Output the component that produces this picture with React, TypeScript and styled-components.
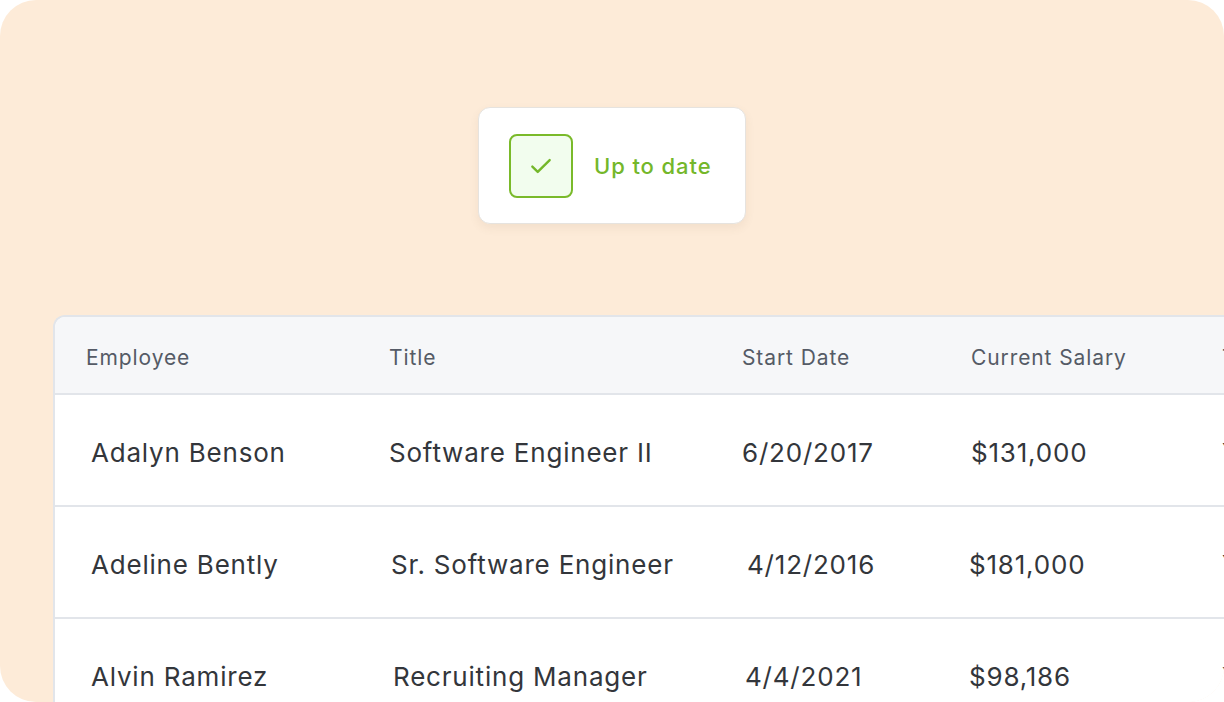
import React from "react";
import styled, { createGlobalStyle } from "styled-components";

const Global = createGlobalStyle`
  body { margin: 0; background: #fff; font-family: Inter, "Noto Sans", sans-serif; }
`;

const Panel = styled.div`
  width: 1224px;
  height: 702px;
  background: #fdebd8;
  border-radius: 36px;
  overflow: hidden;
  display: flex;
  flex-direction: column;
  align-items: center;
  padding-top: 107px;
  box-sizing: border-box;
`;

const Badge = styled.div`
  width: 268px;
  height: 117px;
  box-sizing: border-box;
  background: #fff;
  border: 1px solid #e6e3df;
  border-radius: 12px;
  box-shadow: 0 4px 10px rgba(120, 90, 60, 0.08);
  display: flex;
  align-items: center;
  padding-left: 30px;
  gap: 21px;
`;

const CheckBox = styled.div`
  width: 64px;
  height: 64px;
  box-sizing: border-box;
  border: 2px solid #7aba2a;
  border-radius: 8px;
  background: #f2fdee;
  display: flex;
  align-items: center;
  justify-content: center;
`;

const BadgeText = styled.span`
  font-size: 22px;
  letter-spacing: 0.9px;
  color: #74b72a;
  font-weight: 500;
`;

const Table = styled.div`
  align-self: flex-start;
  margin-top: 91px;
  margin-left: 53px;
  width: 1300px;
  flex: 1;
  background: #fff;
  border: 2px solid #e2e5ea;
  border-right: none;
  border-bottom: none;
  border-top-left-radius: 12px;
  overflow: hidden;
`;

const Row = styled.div<{ $head?: boolean }>`
  display: grid;
  grid-template-columns: 301px 353px 229px 251px 1fr;
  align-items: center;
  height: ${(p) => (p.$head ? "76px" : "110px")};
  background: ${(p) => (p.$head ? "#f6f7f9" : "#fff")};
  border-bottom: 2px solid #e2e5ea;
  font-size: ${(p) => (p.$head ? "21px" : "26px")};
  letter-spacing: ${(p) => (p.$head ? "0.9px" : "0.8px")};
  color: ${(p) => (p.$head ? "#555b66" : "#33363b")};
`;

const Cell = styled.div<{ $dx?: number }>`
  padding-left: ${(p) => 33 + (p.$dx ?? 0)}px;
  white-space: nowrap;
  padding-top: 4px;
`;

const rows: [string, number][][] = [
  [["Adalyn Benson", 3], ["Software Engineer II", 0], ["6/20/2017", 0], ["$131,000", 0]],
  [["Adeline Bently", 3], ["Sr. Software Engineer", 2], ["4/12/2016", 5], ["$181,000", -2]],
  [["Alvin Ramirez", 3], ["Recruiting Manager", 4], ["4/4/2021", 3], ["$98,186", -2]],
];

export default function App() {
  return (
    <>
      <Global />
      <Panel>
        <Badge>
          <CheckBox>
            <svg width="26" height="26" viewBox="0 0 24 24" fill="none" stroke="#74b72a" strokeWidth="2.2" strokeLinecap="round" strokeLinejoin="round">
              <path d="M4 12.5l5 5L20 6.5" />
            </svg>
          </CheckBox>
          <BadgeText>Up to date</BadgeText>
        </Badge>
        <Table>
          <Row $head>
            <Cell $dx={-2}>Employee</Cell>
            <Cell>Title</Cell>
            <Cell>Start Date</Cell>
            <Cell>Current Salary</Cell>
            <Cell>Title</Cell>
          </Row>
          {rows.map((r, i) => (
            <Row key={i}>
              {r.map(([t, dx], j) => (
                <Cell key={j} $dx={dx}>{t}</Cell>
              ))}
              <Cell>Yes</Cell>
            </Row>
          ))}
        </Table>
      </Panel>
    </>
  );
}
